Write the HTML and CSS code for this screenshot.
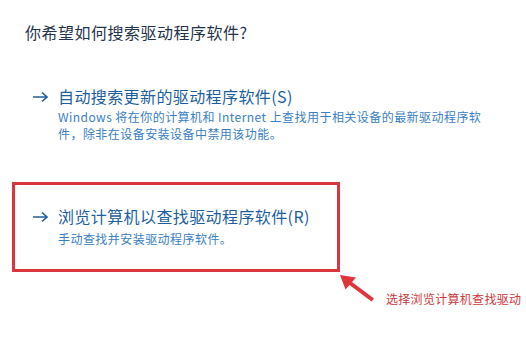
FILE: index.html
```html
<!DOCTYPE html>
<html lang="zh-CN">

<head>
    <meta charset="UTF-8">
    <meta name="viewport" content="width=device-width, initial-scale=1.0">
    <title>更新驱动程序</title>
    <link rel="stylesheet" href="styles.css">
</head>

<body>
    <div class="page">
        <h1 class="title">你希望如何搜索驱动程序软件?</h1>

        <div class="option option--auto">
            <svg class="arrow" width="16" height="12" viewBox="0 0 16 12">
                <path d="M0 6 H14 M9 1.5 L14 6 L9 10.5" fill="none" stroke="#1d5f9e" stroke-width="1.6" />
            </svg>
            <div class="option__body">
                <div class="option__title">自动搜索更新的驱动程序软件(S)</div>
                <div class="option__desc">Windows 将在你的计算机和 Internet 上查找用于相关设备的最新驱动程序软<br>件，除非在设备安装设备中禁用该功能。</div>
            </div>
        </div>

        <div class="highlight">
            <div class="option">
                <svg class="arrow" width="16" height="12" viewBox="0 0 16 12">
                    <path d="M0 6 H14 M9 1.5 L14 6 L9 10.5" fill="none" stroke="#1d5f9e" stroke-width="1.6" />
                </svg>
                <div class="option__body">
                    <div class="option__title">浏览计算机以查找驱动程序软件(R)</div>
                    <div class="option__desc">手动查找并安装驱动程序软件。</div>
                </div>
            </div>
        </div>

        <!-- annotation -->
        <div class="note">
            <svg class="note__arrow" width="40" height="30" viewBox="0 0 40 30">
                <path d="M2 2 L18 4.5 L14 9 L36 25.5 L33.5 28.5 L11.5 12 L7.5 16.5 Z" fill="#e0353b" />
            </svg>
            <span class="note__text">选择浏览计算机查找驱动</span>
        </div>
    </div>
</body>

</html>
```

FILE: styles.css
```css
* {
    box-sizing: border-box;
    padding: 0px;
    margin: 0px;
}

body {
    width: 526px;
    height: 338px;
    background-color: #ffffff;
    font-family: 'Noto Sans CJK SC', 'Noto Sans', sans-serif;
    overflow: hidden;
}

.page {
    position: relative;
    height: 100%;
    padding-top: 22px;
}

.title {
    padding-left: 25px;
    font-size: 16px;
    line-height: 20px;
    font-weight: normal;
    letter-spacing: 0.5px;
    color: #25344d;
}

.option {
    display: flex;
    align-items: flex-start;
}

.option--auto {
    margin-top: 44px;
    padding-left: 33px;
}

.arrow {
    flex: none;
    margin-top: 5px;
    margin-right: 9px;
}

.option__title {
    font-size: 16px;
    line-height: 20px;
    letter-spacing: 0.4px;
    color: #1d5f9e;
}

.option__desc {
    margin-top: 2px;
    font-size: 12px;
    line-height: 17px;
    letter-spacing: 0.45px;
    color: #3a80c4;
}

.highlight {
    margin-top: 40px;
    margin-left: 12px;
    width: 328px;
    height: 90px;
    border: 3px solid #d9363e;
    padding: 21px 0 0 18px;
}

.highlight .option__desc {
    margin-top: 4px;
}

.note {
    position: absolute;
    left: 338px;
    top: 273px;
    display: flex;
    align-items: flex-end;
}

.note__arrow {
    flex: none;
}

.note__text {
    margin-left: 8px;
    margin-bottom: -4px;
    font-size: 12px;
    letter-spacing: 0.3px;
    line-height: 16px;
    color: #d0383c;
}
```
